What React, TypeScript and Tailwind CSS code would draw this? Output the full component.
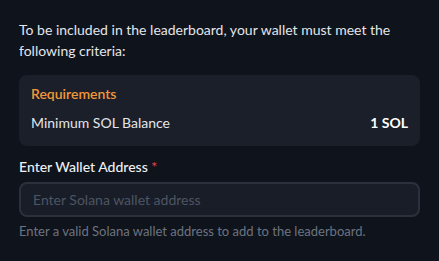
export default function App() {
  return (
    <div
      className="min-h-[261px] w-full bg-[#0f131b] px-[19px] pt-[19px] text-[14px] text-[#e6e8ec]"
      style={{ fontFamily: "Lato, 'Liberation Sans', sans-serif" }}
    >
      <p className="leading-[21px] text-[#e3e5ea]">
        To be included in the leaderboard, your wallet must meet the following criteria:
      </p>

      <div className="mt-[14px] rounded-lg bg-[#1a1f29] px-3 pt-[9px] pb-[13px]">
        <div className="text-[14px] font-semibold leading-5 text-[#f0973a]">Requirements</div>
        <div className="mt-[9px] flex items-center justify-between leading-5">
          <span className="text-[#e3e5ea]">Minimum SOL Balance</span>
          <span className="font-bold text-white">1 SOL</span>
        </div>
      </div>

      <label className="mt-[11px] block text-[14px] font-medium leading-5 text-[#eef0f3]">
        Enter Wallet Address <span className="text-[#e0455a]">*</span>
      </label>
      <input
        type="text"
        placeholder="Enter Solana wallet address"
        className="mt-[5px] h-[35px] w-full rounded-lg border-2 border-[#2b313c] bg-[#181d27] px-3 text-[14px] text-white outline-none placeholder:text-[#4d5563]"
      />
      <p className="mt-[5px] text-[13px] leading-[18px] text-[#6c7380]">
        Enter a valid Solana wallet address to add to the leaderboard.
      </p>
    </div>
  );
}
